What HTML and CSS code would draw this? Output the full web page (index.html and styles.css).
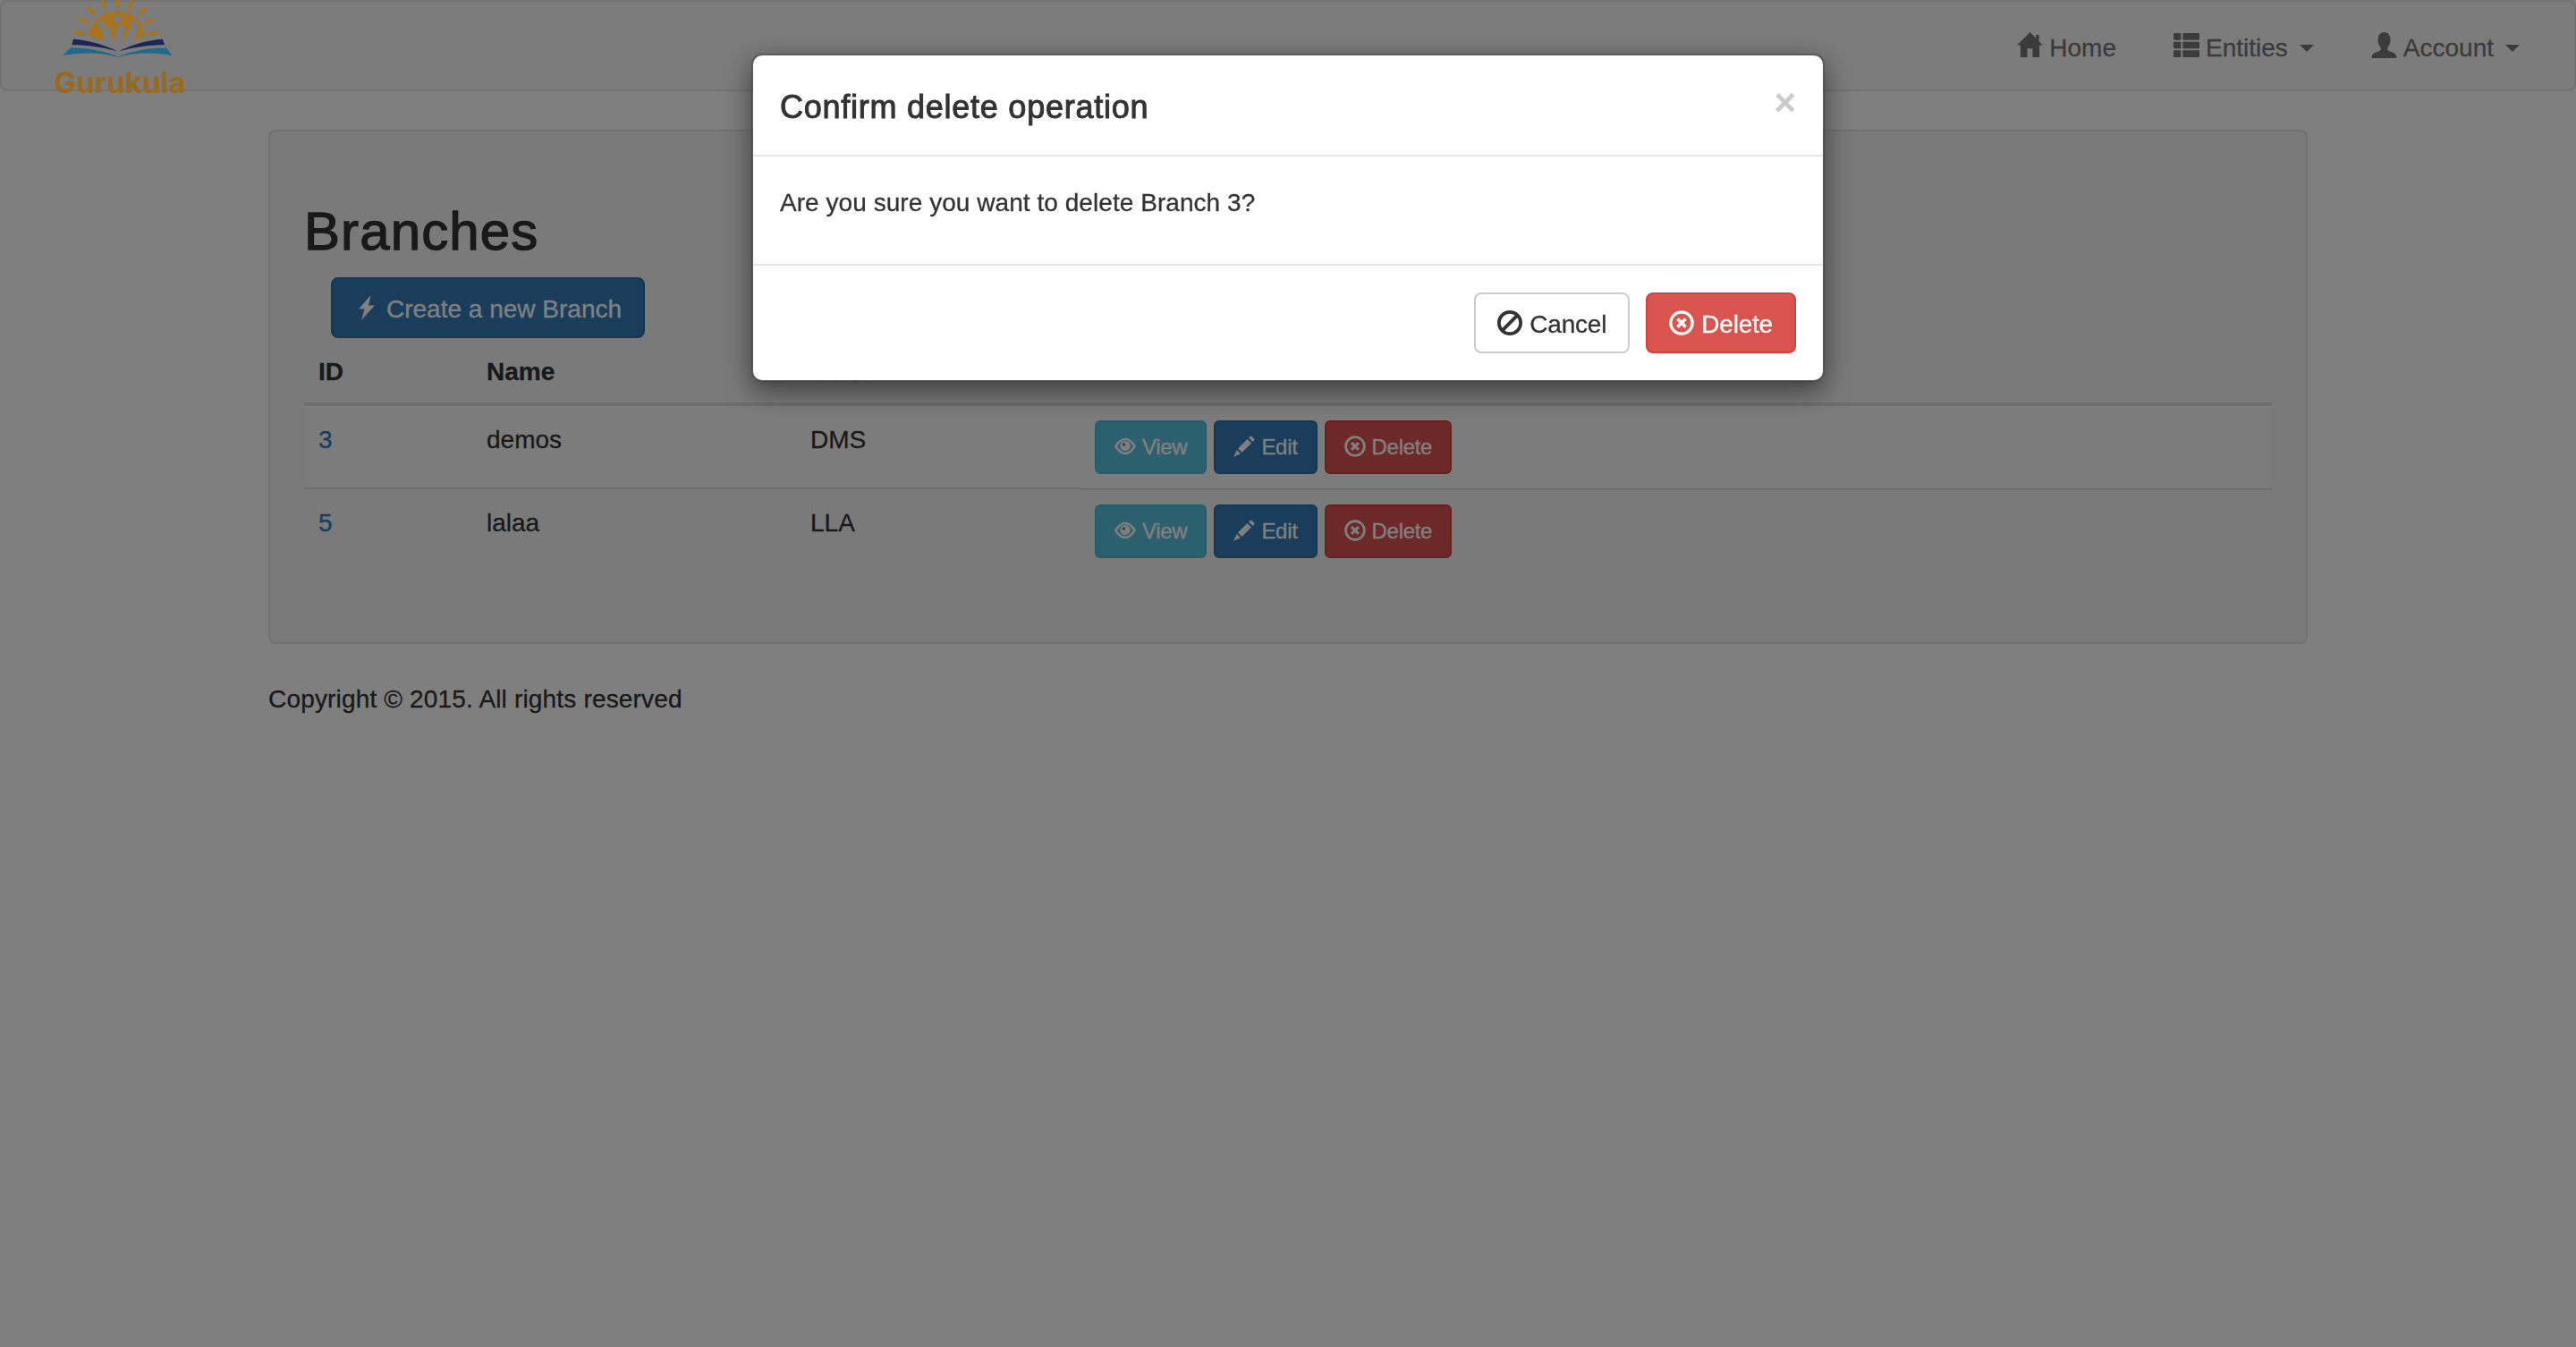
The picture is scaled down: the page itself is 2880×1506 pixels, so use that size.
FILE: index.html
```html
<!DOCTYPE html>
<html lang="en">
<head>
    <meta charset="UTF-8">
    <meta name="viewport" content="width=device-width, initial-scale=1.0">
    <title>Branches - Gurukula</title>
    <link rel="stylesheet" href="styles.css">
</head>
<body>
    <svg class="sprite" aria-hidden="true">
        <symbol id="i-home" viewBox="0 0 30 30"><path d="M15 0L22 7V3H25.5V10.5L30 15H26V29H18V19H12V29H4V15H0Z"/></symbol>
        <symbol id="i-list" viewBox="0 0 28 26">
            <rect y="0" width="8" height="7.4" rx="1"/><rect x="10" y="0" width="18" height="7.4" rx="1"/>
            <rect y="9.3" width="8" height="7.4" rx="1"/><rect x="10" y="9.3" width="18" height="7.4" rx="1"/>
            <rect y="18.6" width="8" height="7.4" rx="1"/><rect x="10" y="18.6" width="18" height="7.4" rx="1"/>
        </symbol>
        <symbol id="i-user" viewBox="0 0 28 29"><path d="M14 0C9 0 7 4 7 9C7 13 9 16 10.5 18C10.5 20 9 21 6 22C2 23.5 0 25 0 29H28C28 25 26 23.5 22 22C19 21 17.5 20 17.5 18C19 16 21 13 21 9C21 4 19 0 14 0Z"/></symbol>
        <symbol id="i-flash" viewBox="0 0 18 28"><path d="M13.5 0L0 15.5H6.5L3 28L18 11.5H11Z"/></symbol>
        <symbol id="i-eye" viewBox="0 0 24 20">
            <path fill="none" stroke="currentColor" stroke-width="2.4" d="M1.3 10C4.5 5 8 2 12 2C16 2 19.5 5 22.7 10C19.5 15 16 18 12 18C8 18 4.5 15 1.3 10Z"/>
            <circle cx="12" cy="9.5" r="5.6"/>
            <circle cx="10.5" cy="8" r="1.8" fill="#7b7b7b"/>
        </symbol>
        <symbol id="i-pencil" viewBox="0 0 24 24">
            <path d="M5 14.5L15.5 4L20 8.500L9.500 19ZM17 2.500L18.800 0.700Q19.500 0 20.200 0.700L23.300 3.800Q24 4.500 23.300 5.200L21.500 7ZM3.800 16L8 20.200L0 24Z"/>
        </symbol>
        <symbol id="i-remove" viewBox="0 0 26 26">
            <circle cx="13" cy="13" r="11.300" fill="none" stroke="currentColor" stroke-width="3"/>
            <path fill="none" stroke="currentColor" stroke-width="3.400" d="M8.800 8.800L17.200 17.200M17.200 8.800L8.800 17.200"/>
        </symbol>
        <symbol id="i-ban" viewBox="0 0 27 27">
            <circle cx="13.500" cy="13.500" r="11.700" fill="none" stroke="currentColor" stroke-width="3.600"/>
            <path fill="none" stroke="currentColor" stroke-width="3.800" d="M5.500 21.500L21.500 5.500"/>
        </symbol>
    </svg>

    <nav class="navbar">
        <a class="brand" href="#">
            <svg class="brand-mark" viewBox="200 0 400 200" aria-hidden="true">
                <g fill="#a8741f">
                    <ellipse cx="347" cy="12" rx="6" ry="20" transform="rotate(-14 347 12)"/>
                    <ellipse cx="395" cy="8" rx="6" ry="17"/>
                    <ellipse cx="438" cy="14" rx="6" ry="20" transform="rotate(16 438 14)"/>
                    <ellipse cx="306" cy="37" rx="6.500" ry="19" transform="rotate(-38 306 37)"/>
                    <ellipse cx="476" cy="38" rx="6.500" ry="19" transform="rotate(38 476 38)"/>
                    <ellipse cx="281" cy="69" rx="6" ry="20" transform="rotate(-64 281 69)"/>
                    <ellipse cx="501" cy="71" rx="6" ry="20" transform="rotate(64 501 71)"/>
                    <ellipse cx="266" cy="109" rx="6" ry="21" transform="rotate(-84 266 109)"/>
                    <ellipse cx="515" cy="111" rx="6" ry="21" transform="rotate(80 515 111)"/>
                    <path d="M296 118C304 70 345 37 392 37C438 37 480 70 487 118L444 135L468 98L437 92L409 145L420 85L394 84L379 145L366 85L340 97L349 137Z"/>
                </g>
                <g fill="#7b7b7b">
                    <circle cx="338" cy="82" r="13"/>
                    <circle cx="394" cy="64" r="13"/>
                    <circle cx="450" cy="82" r="13"/>
                </g>
                <path fill="#1a2558" d="M245 131C290 133 350 150 394 172C350 158 290 150 240 150ZM545 131C500 133 440 150 398 172C440 158 500 150 552 150Z"/>
                <path fill="#1f6a8c" d="M210 186L235 160C290 158 350 170 396 190C442 170 510 158 558 160L578 186C520 175 450 175 396 192C340 175 270 175 210 186Z"/>
            </svg>
            <span class="brand-name">Gurukula</span>
        </a>
        <ul class="nav">
            <li><a href="#"><svg class="icon"><use href="#i-home"/></svg>Home</a></li>
            <li><a href="#"><svg class="icon"><use href="#i-list"/></svg>Entities<span class="caret"></span></a></li>
            <li><a href="#"><svg class="icon"><use href="#i-user"/></svg>Account<span class="caret"></span></a></li>
        </ul>
    </nav>

    <main class="page">
        <section class="well">
            <h2>Branches</h2>
            <a class="btn btn-primary btn-create" href="#"><svg class="icon icon-flash"><use href="#i-flash"/></svg>Create a new Branch</a>
            <table class="table">
                <colgroup>
                    <col class="col-id"><col class="col-name"><col class="col-code"><col>
                </colgroup>
                <thead>
                    <tr><th>ID</th><th>Name</th><th>Code</th><th></th></tr>
                </thead>
                <tbody>
                    <tr>
                        <td><a href="#">3</a></td>
                        <td>demos</td>
                        <td>DMS</td>
                        <td class="actions">
                            <a class="btn btn-sm btn-info" href="#"><svg class="icon"><use href="#i-eye"/></svg>View</a>
                            <a class="btn btn-sm btn-primary" href="#"><svg class="icon"><use href="#i-pencil"/></svg>Edit</a>
                            <a class="btn btn-sm btn-danger" href="#"><svg class="icon"><use href="#i-remove"/></svg>Delete</a>
                        </td>
                    </tr>
                    <tr>
                        <td><a href="#">5</a></td>
                        <td>lalaa</td>
                        <td>LLA</td>
                        <td class="actions">
                            <a class="btn btn-sm btn-info" href="#"><svg class="icon"><use href="#i-eye"/></svg>View</a>
                            <a class="btn btn-sm btn-primary" href="#"><svg class="icon"><use href="#i-pencil"/></svg>Edit</a>
                            <a class="btn btn-sm btn-danger" href="#"><svg class="icon"><use href="#i-remove"/></svg>Delete</a>
                        </td>
                    </tr>
                </tbody>
            </table>
        </section>
        <footer class="footer">Copyright © 2015. All rights reserved</footer>
    </main>

    <div class="backdrop"></div>
    <div class="modal">
        <div class="modal-content">
            <div class="modal-header">
                <h4>Confirm delete operation</h4>
                <span class="close">×</span>
            </div>
            <div class="modal-body">
                <p>Are you sure you want to delete Branch 3?</p>
            </div>
            <div class="modal-footer">
                <a class="btn btn-default" href="#"><svg class="icon"><use href="#i-ban"/></svg>Cancel</a>
                <a class="btn btn-danger" href="#"><svg class="icon"><use href="#i-remove"/></svg>Delete</a>
            </div>
        </div>
    </div>
</body>
</html>
```

FILE: styles.css
```css
* {
    box-sizing: border-box;
}
body {
    font-family: "Liberation Sans", Arial, sans-serif;
    font-size: 28px;
    line-height: 40px;
    color: #333;
    background: #fff;
    -webkit-text-stroke: 0.3px currentColor;
    margin: 0;
    min-height: 1506px;
}
a {
    text-decoration: none;
    color: #337ab7;
}
.sprite {
    display: none;
}
.icon {
    width: 28px;
    height: 28px;
    fill: currentColor;
    flex: none;
}

/* navbar */
.navbar {
    display: flex;
    justify-content: space-between;
    height: 102px;
    background: #f8f8f8;
    border: 2px solid #e7e7e7;
    border-radius: 8px;
    padding-right: 31px;
}
.brand {
    position: relative;
    z-index: 1050;
    display: flex;
    flex-direction: column;
    align-items: flex-start;
    margin-left: 58px;
    height: 110px;
}
.brand-mark {
    display: block;
    flex: none;
    width: 133px;
    height: 67px;
    margin: -2px 0 0 7px;
}
.brand-name {
    font-family: Inter, sans-serif;
    font-weight: 700;
    font-size: 33px;
    line-height: 36px;
    margin-top: 7px;
    color: #99691e;
    -webkit-text-stroke: 0;
}
.nav {
    display: flex;
    gap: 4px;
    list-style: none;
    margin: 0;
    padding: 0;
}
.nav a {
    display: flex;
    align-items: center;
    gap: 7px;
    padding: 32px 30px 28px;
    color: #777;
}
.nav a .icon {
    width: 29px;
    height: 29px;
    margin-top: -7px;
}
.caret {
    width: 0;
    height: 0;
    margin-left: 6px;
    border-top: 8px solid currentColor;
    border-left: 8px solid transparent;
    border-right: 8px solid transparent;
}

/* page */
.page {
    padding: 43px 300px 0;
}
.well {
    background: #f5f5f5;
    border: 2px solid #e3e3e3;
    border-radius: 8px;
    padding: 38px;
    margin-bottom: 40px;
}
h2 {
    font-size: 60px;
    line-height: 66px;
    font-weight: 400;
    letter-spacing: 1.1px;
    -webkit-text-stroke: 1.3px currentColor;
    margin: 41px 0 18px;
}
.btn {
    display: inline-flex;
    align-items: center;
    gap: 8px;
    padding: 14px 24px 10px;
    border: 2px solid transparent;
    border-radius: 8px;
    white-space: nowrap;
}
.btn .icon {
    margin-top: -4px;
}
.btn-create {
    margin-left: 30px;
    vertical-align: top;
}
.btn-sm {
    gap: 7px;
    padding: 8px 20px;
    font-size: 24px;
    line-height: 40px;
    letter-spacing: -0.3px;
    border-radius: 6px;
}
.btn-sm .icon {
    width: 24px;
    height: 24px;
    margin-top: -2px;
}
.btn-default {
    color: #333;
    background: #fff;
    border-color: #ccc;
}
.btn-primary {
    color: #fff;
    background: #337ab7;
    border-color: #2e6da4;
}
.btn-info {
    color: #fff;
    background: #5bc0de;
    border-color: #46b8da;
}
.btn-danger {
    color: #fff;
    background: #d9534f;
    border-color: #d43f3a;
}

/* table */
.table {
    width: 100%;
    table-layout: fixed;
    border-collapse: collapse;
    margin-bottom: 40px;
}
.col-id {
    width: 188px;
}
.col-name {
    width: 362px;
}
.col-code {
    width: 318px;
}
.table th,
.table td {
    padding: 18px 16px 14px;
    text-align: left;
    vertical-align: top;
}
.table th {
    font-weight: 700;
    border-bottom: 4px solid #ddd;
}
.table td {
    border-top: 2px solid #ddd;
}
.table td.actions {
    padding: 16px;
}
.table thead + tbody tr:first-child td {
    border-top: 0;
}
.table tbody tr:nth-child(odd) {
    background: #f9f9f9;
}
.actions {
    display: flex;
    gap: 8px;
}
.footer {
    height: 42px;
    padding-top: 2px;
    letter-spacing: 0.17px;
}

/* modal */
.backdrop {
    position: fixed;
    inset: 0;
    z-index: 1040;
    background: #000;
    opacity: 0.5;
}
.modal {
    position: fixed;
    inset: 0;
    z-index: 1060;
}
.modal-content {
    width: 1200px;
    margin: 60px auto 0;
    background: #fff;
    background-clip: padding-box;
    border: 2px solid rgba(0, 0, 0, 0.2);
    border-radius: 12px;
    box-shadow: 0 10px 30px rgba(0, 0, 0, 0.5);
}
.modal-header {
    display: flex;
    justify-content: space-between;
    padding: 32px 30px 28px;
    border-bottom: 2px solid #e5e5e5;
}
.modal-header h4 {
    font-size: 36px;
    line-height: 51px;
    font-weight: 400;
    letter-spacing: 0.75px;
    -webkit-text-stroke: 1px currentColor;
    margin: 0;
}
.close {
    font-size: 42px;
    line-height: 42px;
    font-weight: 700;
    color: #000;
    opacity: 0.2;
}
.modal-body {
    padding: 32px 30px 28px;
    letter-spacing: 0.05px;
}
.modal-body p {
    margin: 0 0 20px;
}
.modal-footer {
    display: flex;
    justify-content: flex-end;
    gap: 18px;
    padding: 30px;
    border-top: 2px solid #e5e5e5;
    letter-spacing: -0.2px;
}
```
